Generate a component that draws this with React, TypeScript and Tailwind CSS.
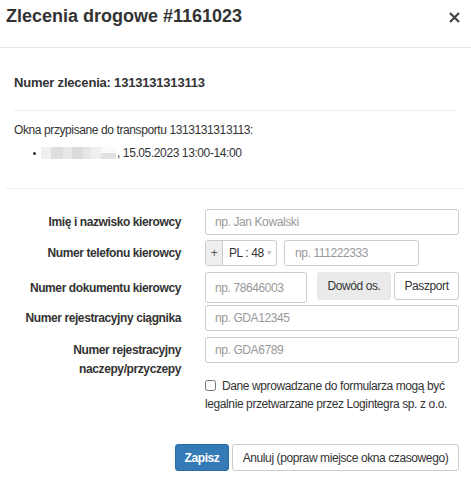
import React from "react";

const font = { fontFamily: '"Liberation Sans", Arial, sans-serif' };

const inputCls =
  "h-[26px] rounded-[3px] border border-[#ccc] bg-white px-[9px] text-[12px] text-[#555] placeholder:text-[#999] outline-none";

export default function App() {
  return (
    <div className="h-[482px] w-[471px] bg-white text-[#333] tracking-[-0.4px]" style={font}>
      {/* header */}
      <div className="flex h-[48px] items-start justify-between border-b border-[#e5e5e5] pl-[6px] pr-[11px] pt-[6px]">
        <h4 className="text-[18px] font-bold leading-[20px] tracking-normal">Zlecenia drogowe #1161023</h4>
        <button type="button" className="mt-[6px] text-[#444]">
          <svg width="11" height="11" viewBox="0 0 11 11" className="block">
            <path d="M1 1L10 10M10 1L1 10" stroke="currentColor" strokeWidth="2.2" />
          </svg>
        </button>
      </div>

      {/* body */}
      <div className="px-[6px]">
        <div className="px-[8px]">
          <div className="pt-[27px] text-[13px] font-bold leading-[15px] tracking-[-0.2px]">
            Numer zlecenia: 1313131313113
          </div>
          <div className="mt-[20px] border-t border-[#eee]" />
          <div className="pt-[12px] text-[12px] leading-[14px]">Okna przypisane do transportu 1313131313113:</div>
          <ul className="mt-[9px] pl-[19px] text-[12px] leading-[14px]">
            <li className="flex items-center">
              <span className="mr-[5px] h-[3px] w-[3px] rounded-full bg-[#333]" />
              <span className="mr-[1px] flex h-[12px]">
                <span className="w-[10px] bg-[#f0f0f0]" />
                <span className="w-[12px] bg-[#dedede]" />
                <span className="w-[9px] bg-[#e8e8e8]" />
                <span className="w-[11px] bg-[#dcdcdc]" />
                <span className="w-[8px] bg-[#e6e6e6]" />
                <span className="w-[10px] bg-[#efefef]" />
                <span className="flex w-[15px] flex-col">
                  <span className="h-[6px] bg-[#fafafa]" />
                  <span className="h-[6px] bg-[#e2e2e2]" />
                </span>
              </span>
              , 15.05.2023 13:00-14:00
            </li>
          </ul>
        </div>
        <div className="mt-[28px] border-t border-[#eee]" />

        {/* form */}
        <div className="pt-[20px] text-[12px]">
          <div className="flex items-center">
            <label className="w-[175px] text-right font-bold">Imię i nazwisko kierowcy</label>
            <input className={`${inputCls} ml-[24px] w-[254px]`} placeholder="np. Jan Kowalski" />
          </div>

          <div className="mt-[5px] flex items-center">
            <label className="w-[175px] text-right font-bold">Numer telefonu kierowcy</label>
            <div className="ml-[24px] flex h-[26px] w-[72px] rounded-[3px] border border-[#ccc]">
              <span className="flex w-[17px] items-center justify-center border-r border-[#ccc] bg-[#eee] text-[12px] text-[#555]">
                +
              </span>
              <span className="flex flex-1 items-center pl-[6px] text-[12px] text-[#333]">
                PL : 48
                <span className="ml-[2px] text-[7px] text-[#bbb]">▼</span>
              </span>
            </div>
            <input className={`${inputCls} ml-[7px] w-[135px] pl-[10px]`} placeholder="np. 111222333" />
          </div>

          <div className="mt-[6px] flex items-center">
            <label className="w-[175px] text-right font-bold">Numer dokumentu kierowcy</label>
            <input className={`${inputCls} ml-[24px] h-[31px] w-[102px]`} placeholder="np. 78646003" />
            <button
              type="button"
              className="ml-[10px] h-[28px] w-[74px] self-start rounded-[3px] border border-[#e6e6e6] bg-[#eaeaea] text-[12px] text-[#333]"
            >
              Dowód os.
            </button>
            <button
              type="button"
              className="ml-[3px] h-[28px] w-[65px] self-start rounded-[3px] border border-[#ccc] bg-white text-[12px] text-[#333]"
            >
              Paszport
            </button>
          </div>

          <div className="mt-[2px] flex items-center">
            <label className="w-[175px] text-right font-bold">Numer rejestracyjny ciągnika</label>
            <input className={`${inputCls} ml-[24px] w-[254px]`} placeholder="np. GDA12345" />
          </div>

          <div className="mt-[6px] flex items-start">
            <label className="w-[175px] pt-[4px] text-right font-bold leading-[19px]">
              Numer rejestracyjny
              <br />
              naczepy/przyczepy
            </label>
            <input className={`${inputCls} ml-[24px] w-[254px]`} placeholder="np. GDA6789" />
          </div>

          <div className="ml-[199px] mt-[-2px] w-[256px] leading-[18px]">
            <label>
              <input type="checkbox" className="mr-[6px] h-[11px] w-[11px] translate-y-[1px] align-baseline" />
              Dane wprowadzane do formularza mogą być legalnie przetwarzane przez Logintegra sp. z o.o.
            </label>
          </div>

          <div className="ml-[169px] mt-[31px] flex">
            <button
              type="button"
              className="h-[27px] w-[54px] rounded-[3px] border border-[#2e6da4] bg-[#337ab7] text-[12px] font-bold text-white"
            >
              Zapisz
            </button>
            <button
              type="button"
              className="ml-[3px] h-[27px] w-[227px] rounded-[3px] border border-[#ccc] bg-white text-[12px] text-[#333]"
            >
              Anuluj (popraw miejsce okna czasowego)
            </button>
          </div>
        </div>
      </div>
    </div>
  );
}
